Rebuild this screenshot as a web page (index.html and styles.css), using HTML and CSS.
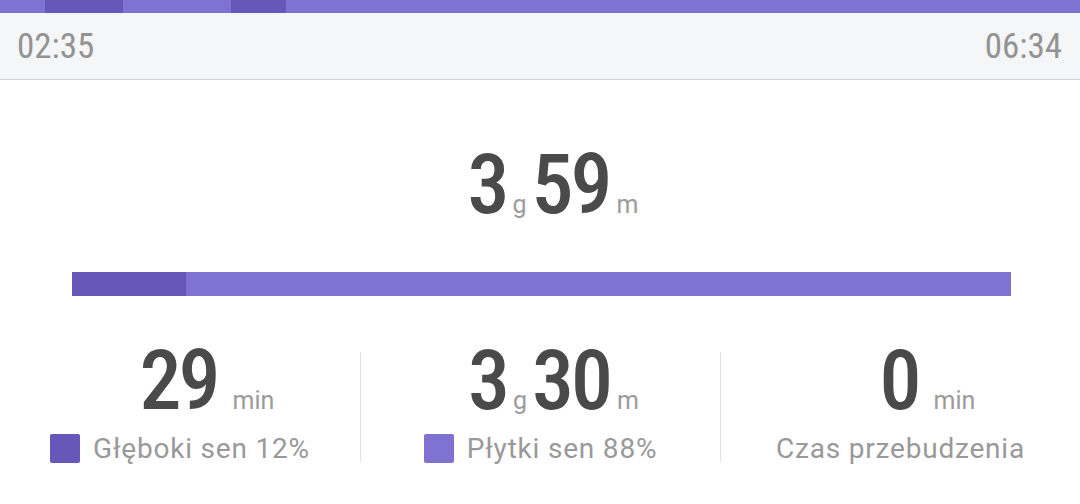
FILE: index.html
```html
<!DOCTYPE html>
<html lang="pl">
<head>
<meta charset="utf-8">
<link rel="stylesheet" href="styles.css">
</head>
<body>
<div class="timeline">
  <div class="seg light" style="flex-basis:45px"></div>
  <div class="seg deep" style="flex-basis:78px"></div>
  <div class="seg light" style="flex-basis:108px"></div>
  <div class="seg deep" style="flex-basis:55px"></div>
  <div class="seg light rest"></div>
</div>
<header class="header">
  <span class="time">02:35</span>
  <span class="time">06:34</span>
</header>
<section class="total">
  <div class="value">
    <span class="val-main"><span class="num">3</span><span class="unit">g</span><span class="num">59</span></span>
    <span class="unit trailing">m</span>
  </div>
</section>
<div class="bar">
  <div class="bar-deep" style="width:12.1%"></div>
  <div class="bar-light"></div>
</div>
<section class="stats">
  <div class="stat">
    <div class="value small">
      <span class="val-main"><span class="num">29</span></span>
      <span class="unit trailing wide">min</span>
    </div>
    <div class="label"><span class="swatch deep"></span>Głęboki sen 12%</div>
  </div>
  <div class="stat">
    <div class="value small">
      <span class="val-main"><span class="num">3</span><span class="unit">g</span><span class="num">30</span></span>
      <span class="unit trailing">m</span>
    </div>
    <div class="label"><span class="swatch light"></span>Płytki sen 88%</div>
  </div>
  <div class="stat">
    <div class="value small">
      <span class="val-main"><span class="num">0</span></span>
      <span class="unit trailing wide">min</span>
    </div>
    <div class="label">Czas przebudzenia</div>
  </div>
</section>
</body>
</html>
```
FILE: styles.css
```css
html, body {
  margin: 0;
  padding: 0;
  background: #ffffff;
  font-family: Roboto, "Noto Sans", "Liberation Sans", sans-serif;
}
.timeline {
  display: flex;
  height: 13px;
}
.seg { flex-shrink: 0; }
.seg.rest { flex: 1 1 auto; }
.light { background: #7f72d0; }
.deep { background: #6657b8; }
.header {
  height: 66px;
  background: #f5f6f8;
  border-bottom: 1px solid #d3d3d6;
  display: flex;
  justify-content: space-between;
  align-items: center;
  padding: 0 18px 0 17px;
}
.time {
  font-size: 35px;
  font-weight: 400;
  font-stretch: 87%;
  color: #939393;
  letter-spacing: 0;
  line-height: 1;
  padding-top: 1px;
}
.total {
  padding-top: 63px;
  height: 129px;
}
.value {
  display: grid;
  grid-template-columns: 1fr auto 1fr;
  align-items: baseline;
  line-height: 1;
}
.val-main {
  grid-column: 2;
  display: flex;
  align-items: baseline;
}
.num {
  font-size: 84px;
  font-weight: 500;
  font-stretch: 87%;
  color: #4a4a4a;
  letter-spacing: -3px;
  margin-right: 3px;
}
.unit {
  font-size: 25px;
  color: #9b9b9b;
  margin: 0 5px 0 3px;
}
.trailing {
  grid-column: 3;
  justify-self: start;
  margin: 0 0 0 4px;
}
.trailing.wide { margin-left: 12px; }
.bar {
  display: flex;
  height: 24px;
  margin: 0 69px 0 72px;
}
.bar-deep { background: #6657b8; }
.bar-light { background: #7f72d0; flex: 1; }
.stats {
  display: grid;
  grid-template-columns: 1fr 1fr 1fr;
  margin-top: 56px;
  padding-bottom: 42px;
}
.stat {
  border-left: 1px solid #e2e2e2;
  height: 110px;
  display: flex;
  flex-direction: column;
  align-items: stretch;
}
.stat:first-child { border-left: none; }
.value.small { margin-top: -13px; }
.label {
  display: flex;
  justify-content: center;
  align-items: center;
  font-size: 28px;
  letter-spacing: 0.8px;
  color: #999999;
  margin-top: 9px;
}
.swatch {
  width: 30px;
  height: 29px;
  border-radius: 2px;
  margin-right: 13px;
}
```
